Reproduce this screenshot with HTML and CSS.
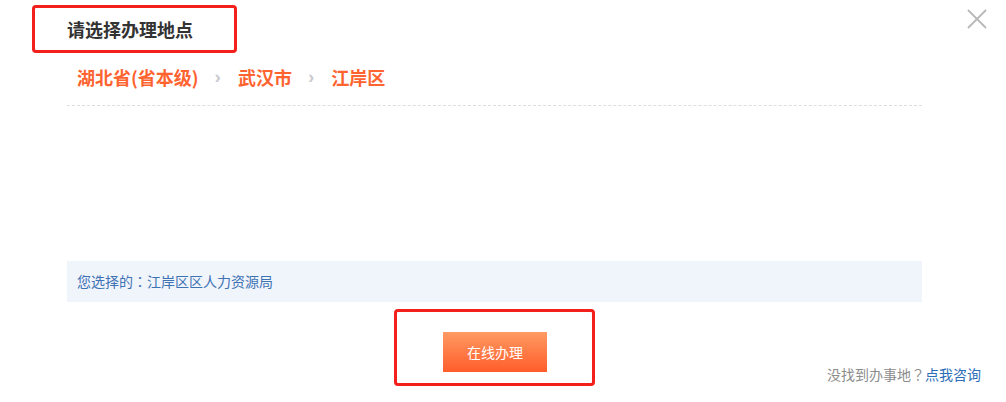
FILE: index.html
```html
<!DOCTYPE html>
<html lang="zh-CN">
<head>
    <meta charset="UTF-8">
    <meta name="viewport" content="width=device-width, initial-scale=1.0">
    <link rel="stylesheet" href="styles.css">
</head>
<body>
<div class="dialog">
    <div class="dialog-head">
        <div class="mark title-box">
            <h3 class="title">请选择办理地点</h3>
        </div>
        <a class="close" href="#" title="关闭">
            <svg width="20" height="20" viewBox="0 0 20 20">
                <path d="M1 1 L19 19 M19 1 L1 19" stroke="#b9b9b9" stroke-width="1.8" fill="none"/>
            </svg>
        </a>
    </div>

    <div class="dialog-body">
        <div class="crumbs">
            <span class="crumb">湖北省(省本级)</span>
            <span class="sep">›</span>
            <span class="crumb">武汉市</span>
            <span class="sep">›</span>
            <span class="crumb">江岸区</span>
        </div>

        <div class="picked">您选择的<span class="punct" lang="zh-TW">：</span>江岸区区人力资源局</div>
    </div>

    <div class="dialog-foot">
        <div class="mark btn-box">
            <button class="go">在线办理</button>
        </div>
        <p class="help">没找到办事地<span class="punct" lang="zh-TW">？</span><a href="#">点我咨询</a></p>
    </div>
</div>
</body>
</html>
```

FILE: styles.css
```css
body {
    margin: 0;
    background: #fff;
    font-family: "Microsoft YaHei", "Noto Sans CJK SC", sans-serif;
    color: #333;
}

.dialog {
    width: 1006px;
    height: 402px;
    overflow: hidden;
}

.dialog-head {
    position: relative;
    padding: 5px 0 0 32px;
}

/* red highlight frames */
.mark {
    box-sizing: border-box;
    border: 3px solid #f3201b;
    border-radius: 4px;
}

.title-box {
    width: 205px;
    height: 48px;
    display: flex;
    align-items: center;
    padding-left: 32px;
}

.title {
    margin: 0;
    font-size: 18px;
    font-weight: bold;
    line-height: 24px;
    color: #333;
}

.close {
    position: absolute;
    top: 9px;
    right: 19px;
    display: block;
    width: 20px;
    height: 20px;
}

.dialog-body {
    margin: 0 84px 0 67px;
}

.crumbs {
    display: flex;
    align-items: center;
    padding: 12px 0 16px 10px;
    border-bottom: 1px dashed #dedede;
    line-height: 24px;
}

.crumb {
    font-size: 18px;
    font-weight: bold;
    color: #ff6430;
}

.sep {
    margin: 0 17px 0 16px;
    font-family: "Liberation Sans", sans-serif;
    font-size: 19px;
    font-weight: bold;
    color: #c9cbd0;
}

/* centred full-width punctuation */
.punct {
    font-family: "Noto Sans CJK TC", sans-serif;
}

.picked {
    margin-top: 155px;
    height: 41px;
    line-height: 41px;
    padding-left: 10px;
    background: #f0f4fb;
    font-size: 14px;
    color: #3d72b4;
}

.dialog-foot {
    display: grid;
    grid-template-columns: 1fr 201px 1fr;
    margin-top: 7px;
    padding: 0 25px 0 7px;
}

.btn-box {
    grid-column: 2;
    height: 77px;
    display: flex;
    justify-content: center;
    align-items: flex-start;
    padding-top: 20px;
}

.go {
    width: 104px;
    height: 40px;
    border: none;
    padding: 0;
    margin-left: 2px;
    background: linear-gradient(#ff9a62, #ff5d2b);
    color: #fff;
    font-family: inherit;
    font-size: 14px;
    cursor: pointer;
}

.help {
    grid-column: 3;
    justify-self: end;
    align-self: end;
    margin: 0 0 2px;
    line-height: 20px;
    font-size: 14px;
    color: #8c8c8c;
}

.help a {
    color: #2c6db8;
    text-decoration: none;
}
```
